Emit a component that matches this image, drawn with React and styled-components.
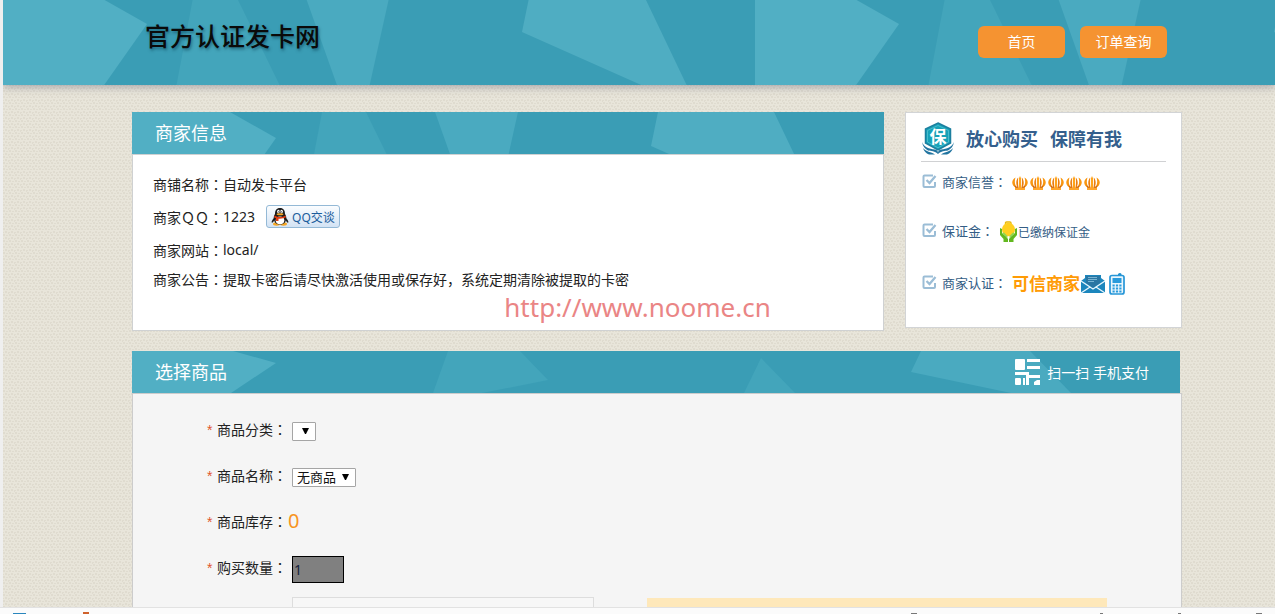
import styled, { createGlobalStyle } from "styled-components";

const svgUrl = (width, height, body) =>
  `url("data:image/svg+xml,${encodeURIComponent(
    `<svg xmlns="http://www.w3.org/2000/svg" width="${width}" height="${height}">${body}</svg>`
  )}")`;

const paper = svgUrl(
  6,
  6,
  `<rect width="6" height="6" fill="#e8e5da"/>
   <path d="M0 0h2v2h-2zM3 1h2v1h-2zM2 3h2v2h-2zM5 4h1v2h-1zM0 4h1v1h-1z" fill="#dfdbcf"/>`
);

const facets = svgUrl(
  752,
  90,
  `<rect width="752" height="90" fill="#3a9db5"/>
   <path d="M0 0H98L144 26L99 90H0z" fill="#51afc4"/>
   <path d="M190 0H234L278 90H173z" fill="#43a5bb"/>
   <path d="M303 0H386L366 90H335z" fill="#4aaac0"/>
   <path d="M526 0H642L685 90H645L519 34z" fill="#4fadc2"/>`
);

const wideFacets = svgUrl(
  1050,
  42,
  `<rect width="1050" height="42" fill="#3a9db5"/>
   <path d="M0 0H101L144 12L99 42H0z" fill="#51afc4"/>
   <path d="M316 0H388L416 29L350 42H301z" fill="#43a5bb"/>
   <path d="M629 7L663 42H612z" fill="#43a5bb"/>
   <path d="M789 0H898L939 42H879L779 21z" fill="#4aaac0"/>`
);

const arrow = svgUrl(7, 7, `<path d="M0 0H7L4 6H3z" fill="#000"/>`);

const GlobalStyle = createGlobalStyle`
  * {
    box-sizing: border-box;
  }
  body {
    margin: 0;
    font-family: "Noto Sans", "Noto Sans CJK SC", sans-serif;
    font-size: 14px;
    color: #222;
  }
  h1, h2, h3, p, ul {
    margin: 0;
    padding: 0;
    font-weight: 400;
  }
  ul {
    list-style: none;
  }
  a {
    color: inherit;
    text-decoration: none;
  }
`;

const Shell = styled.div`
  position: relative;
  display: grid;
  grid-template-rows: minmax(0, 1fr) 7px;
  height: 100vh;
  overflow: hidden;
`;

const Page = styled.div`
  overflow: hidden;
  border-left: 3px solid #efefef;
  background: ${paper};
`;

const Header = styled.header`
  display: flex;
  justify-content: space-between;
  align-items: flex-start;
  height: 85px;
  padding: 26px 108px 0 142px;
  background: ${facets} 0 -2px repeat-x;
  box-shadow: 0 2px 8px rgba(90, 90, 110, 0.45);
`;

const Logo = styled.h1`
  font-size: 25px;
  font-weight: 500;
  line-height: 20px;
  color: #0a0a0a;
  text-shadow: 1px 2px 3px rgba(0, 50, 70, 0.5);
`;

const Nav = styled.nav`
  display: flex;
  gap: 15px;
`;

const NavLink = styled.a`
  width: 87px;
  border-radius: 6px;
  background: #f59331;
  color: #fff;
  line-height: 32px;
  text-align: center;
`;

const Main = styled.main`
  display: grid;
  gap: 20px;
  padding: 27px 93px 0 129px;
`;

const TopRow = styled.div`
  display: grid;
  grid-template-columns: minmax(0, 1fr) 277px;
  gap: 21px;
`;

const PanelHead = styled.div`
  display: flex;
  justify-content: space-between;
  align-items: center;
  height: 42px;
  margin-right: ${(props) => (props.$wide ? "2px" : "0")};
  padding: 0 31px 0 23px;
  background: ${(props) => (props.$wide ? wideFacets : facets)} no-repeat #3a9db5;
  color: #fff;
`;

const PanelTitle = styled.h2`
  padding-bottom: 2px;
  font-size: 18px;
`;

const PanelBody = styled.div`
  border: 1px solid #cfd1d2;
  background: #fff;
`;

const ShopBody = styled(PanelBody)`
  height: 177px;
  padding: 12px 20px;
`;

const InfoRow = styled.p`
  display: flex;
  align-items: center;
  height: ${(props) => (props.$tight ? "26px" : "33px")};
`;

const QQButton = styled.button`
  display: flex;
  align-items: center;
  gap: 3px;
  width: 74px;
  height: 23px;
  margin-left: 11px;
  padding: 0 4px;
  border: 1px solid #94b9d6;
  border-radius: 3px;
  background: linear-gradient(#fbfdff, #d3e3f4);
  font: inherit;
  font-size: 12px;
  color: #1c5d9c;
  white-space: nowrap;
`;

/* the full-width colon sits in the middle of its cell in the TC face */
const Mark = styled.span`
  font-family: "Noto Sans CJK TC", sans-serif;
`;

const Aside = styled.aside`
  height: 216px;
  padding: 8px 15px;
  border: 1px solid #d2d4d6;
  background: #fff;
  color: #345d85;
  font-size: 13px;
`;

const Promise = styled.h3`
  display: flex;
  align-items: center;
  height: 41px;
  padding-bottom: 6px;
  border-bottom: 1px solid #d0d1d3;
  font-size: 18px;
  font-weight: 700;
  color: #345f8d;
  white-space: nowrap;
  svg {
    margin-right: 11px;
  }
  span + span {
    margin-left: 12px;
  }
`;

const TrustRow = styled.li`
  display: flex;
  align-items: center;
  height: ${(props) => props.$height};
  padding-left: 1px;
  > svg:first-child {
    margin-right: 5px;
  }
`;

const TrustValue = styled.span`
  display: flex;
  align-items: center;
  gap: ${(props) => props.$gap || "0"};
  margin-left: 5px;
  padding-top: 3px;
  font-size: 12px;
`;

const Trusted = styled.strong`
  font-size: 17px;
  line-height: 20px;
  color: #ff9b05;
`;

const ScanLink = styled.a`
  display: flex;
  align-items: center;
  gap: 6px;
`;

const OrderForm = styled.form`
  padding: 12px 0 0 74px;
  border: 1px solid #ccc;
  background: #f5f5f5;
`;

const Field = styled.div`
  display: flex;
  align-items: center;
  height: 46px;
`;

const Label = styled.label`
  width: 81px;
  white-space: nowrap;
  &::before {
    content: "*";
    display: inline-block;
    width: 10px;
    font-family: "Liberation Sans", sans-serif;
    color: #e0562b;
  }
`;

const Select = styled.select`
  appearance: none;
  width: ${(props) => props.$width};
  height: 19px;
  margin: 4px 0 0 4px;
  padding: 0 0 0 4px;
  border: 1px solid #a5a5a5;
  border-radius: 1px;
  background: ${arrow} no-repeat right 6px top 5px #fff;
  font: inherit;
  font-size: 13px;
  line-height: 17px;
  color: #111;
`;

const Stock = styled.output`
  font-size: 20px;
  line-height: 24px;
  color: #f7941e;
`;

const Quantity = styled.input`
  width: 52px;
  height: 27px;
  margin: 4px 0 0 4px;
  padding: 0 1px;
  border: 1px solid #000;
  background: #808080;
  font: inherit;
  color: #16213a;
`;

const NoteRow = styled.div`
  display: flex;
  align-items: flex-start;
  gap: 53px;
  padding: 7px 74px 0 85px;
`;

const Contact = styled.input`
  width: 302px;
  height: 36px;
  border: 1px solid #ddd;
  background: #f7f7f7;
`;

const Hint = styled.div`
  flex: 1;
  height: 36px;
  margin-top: 1px;
  background: #fee8ba;
`;

const StatusBar = styled.footer`
  display: flex;
  justify-content: space-between;
  align-items: flex-end;
  padding: 0 13px;
  border-top: 1px solid #e2e2e2;
  background: #fbfbfb;
`;

const TabGroup = styled.div`
  display: flex;
  align-items: flex-end;
  gap: ${(props) => props.$gap};
`;

const TabTip = styled.span`
  width: ${(props) => props.$width};
  height: ${(props) => props.$height || "1px"};
  margin-right: ${(props) => props.$space || "0"};
  background: ${(props) => props.$color || "#777"};
`;

const Watermark = styled.div`
  position: absolute;
  top: 50%;
  left: 50%;
  transform: translate(-50%, -50%);
  font-family: "Comic Sans MS", "Noto Sans", sans-serif;
  font-size: 26px;
  line-height: 30px;
  color: #ea8585;
  pointer-events: none;
`;

const Colon = () => <Mark>：</Mark>;

const Penguin = () => (
  <svg width="18" height="18" viewBox="0 0 18 18">
    <path d="M3 10C1 12 0 14 1 15L3 13zM15 10C17 12 18 14 17 15L15 13z" fill="#222" />
    <ellipse cx="5.5" cy="16" rx="3.5" ry="1.7" fill="#f5a623" />
    <ellipse cx="12.5" cy="16" rx="3.5" ry="1.7" fill="#f5a623" />
    <path d="M9 0C5.5 0 4 2.500 4 6C2.500 8 2.500 10 3 12C4 15.500 6 16.500 9 16.500S14 15.500 15 12C15.500 10 15.500 8 14 6C14 2.500 12.500 0 9 0z" fill="#1b1b1b" />
    <ellipse cx="9" cy="12.300" rx="4.300" ry="3.900" fill="#fff" />
    <ellipse cx="7.400" cy="3.600" rx="1.300" ry="1.800" fill="#fff" />
    <ellipse cx="10.600" cy="3.600" rx="1.300" ry="1.800" fill="#fff" />
    <circle cx="7.800" cy="3.800" r=".6" />
    <circle cx="10.200" cy="3.800" r=".6" />
    <ellipse cx="9" cy="6.300" rx="3.400" ry="1" fill="#f5a623" />
    <path d="M3.500 7.500C7 9.500 11 9.500 14.500 7.500L15 9.300C13 10.400 10 11 7.500 10.700V13H5V10.300L3.200 9.400z" fill="#e03c12" />
  </svg>
);

const Shield = () => (
  <svg width="34" height="33" viewBox="0 0 34 33">
    <path d="M17 1L29.500 7V21L17 28L4.500 21V7z" fill="#17a2b8" stroke="#1c7f9f" strokeWidth="1.500" />
    <path d="M17 3.500L27.500 8.500V20L17 25.800L6.500 20V8.500z" fill="none" stroke="#5fc6d4" strokeWidth=".7" />
    <path d="M1 20C3 25 8 27 14 27.500C16 28 17 29 17 31C17 29 18 28 20 27.500C26 27 31 25 33 20C32.500 24 30 27 27 28.500C24 29 20 29 17 32C14 29 10 29 7 28.500C4 27 1.500 24 1 20z" fill="#2174a0" />
    <path d="M2 26C5 30 10 29.500 14 32.500H8C5 31.500 3 29 2 26zM32 26C29 30 24 29.500 20 32.500H26C29 31.500 31 29 32 26z" fill="#2174a0" />
    <text x="17" y="20.500" textAnchor="middle" fontSize="17" fontWeight="700" fill="#fff">保</text>
  </svg>
);

const Tick = () => (
  <svg width="15" height="15" viewBox="0 0 15 15" fill="none" stroke="#9bbdd6">
    <path d="M11 1.500H2.500Q1.500 1.500 1.500 2.500V12Q1.500 13 2.500 13H12Q13 13 13 12V8" strokeWidth="2" />
    <path d="M4.500 6L7.500 9L13.500 2" strokeWidth="2.300" />
  </svg>
);

const Crown = () => (
  <svg width="16" height="14" viewBox="0 0 16 14">
    <path d="M4 12C-.8 9.500-1 4 3.500 1.500C2.300 5 2.600 8.500 5 12zM12 12C16.800 9.500 17 4 12.500 1.500C13.700 5 13.400 8.500 11 12z" fill="#f9960f" />
    <path d="M5.800 12C3.600 8.500 3.900 4 6.200 1.500C5.700 5 5.900 8.500 6.600 12zM10.200 12C12.400 8.500 12.100 4 9.800 1.500C10.300 5 10.100 8.500 9.400 12z" fill="#e97b0c" />
    <path d="M8 0L9.100 2.500V12H6.900V2.500z" fill="#ffa31a" />
    <path d="M2 8C3 9.800 4 10.500 5.500 10.800L6.500 12H3.500zM14 8C13 9.800 12 10.500 10.500 10.800L9.500 12H12.500z" fill="#c9600f" />
    <path d="M3 11.700H13V14H3z" fill="#ffa62b" />
  </svg>
);

const Deposit = () => (
  <svg width="19" height="21" viewBox="0 0 19 21">
    <path d="M6.500 3V2Q6.500 1 7.500 1H11Q12 1 12 2V3" fill="none" stroke="#e8b80c" strokeWidth="1.400" />
    <ellipse cx="9.500" cy="8.500" rx="6.500" ry="6.800" fill="#ffcf1f" />
    <path d="M1 7L3 8V12L7 15.500L9 18V21H4.500V18L1 14zM18 7L16 8V12L12 15.500L10 18V21H14.500V18L18 14z" fill="#62b81f" />
    <path d="M3 12L5 11.500L8.500 15V17zM16 12L14 11.500L10.500 15V17z" fill="#94d84e" />
  </svg>
);

const Mail = () => (
  <svg width="26" height="20" viewBox="0 0 26 20">
    <path d="M1 7L5 4V1H21V4L25 7V19H1z" fill="#1c86bd" />
    <path d="M6 2H20V9L13 14L6 9z" fill="#2a76a3" />
    <path d="M8 3.500H17M8 5.500H17M8 7.500H14" stroke="#8cc4e0" strokeWidth=".8" />
    <path d="M1 7L10 13L1 19M25 7L16 13L25 19M10 13L13 15L16 13" fill="none" stroke="#e9f6fc" strokeWidth="1.300" />
  </svg>
);

const Phone = () => (
  <svg width="19" height="22" viewBox="-3 0 19 22">
    <path d="M9 3V1Q11 -1 12.500 1V3" fill="#1f8fcc" />
    <rect x="1" y="2.500" width="14" height="18.500" rx="2" fill="#eaf6fd" stroke="#2696d8" strokeWidth="1.700" />
    <rect x="3.500" y="5" width="9" height="5" fill="#2a9bdc" />
    <path d="M3.500 12.500H12.500M3.500 15.500H12.500M3.500 18.500H12.500" stroke="#2a9bdc" strokeWidth="2" strokeDasharray="2.200 1.200" />
  </svg>
);

const QRIcon = () => (
  <svg width="26" height="26" viewBox="0 0 26 26" fill="#fff">
    <rect width="10" height="11" rx="1" />
    <path d="M12 0H25V3H12zM12 7H25V10H12zM0 13H14V16H25V19H14V26H11V16H0z" />
    <rect y="19" width="6" height="7" rx="1" />
    <path d="M8 19H10V26H8zM22 21H25V26H19V23z" />
  </svg>
);

export default function App() {
  return (
    <Shell>
      <GlobalStyle />
      <Page>
        <Header>
          <Logo>官方认证发卡网</Logo>
          <Nav>
            <NavLink href="#home">首页</NavLink>
            <NavLink href="#orders">订单查询</NavLink>
          </Nav>
        </Header>
        <Main>
          <TopRow>
            <section>
              <PanelHead>
                <PanelTitle>商家信息</PanelTitle>
              </PanelHead>
              <ShopBody>
                <InfoRow>
                  商铺名称<Colon />自动发卡平台
                </InfoRow>
                <InfoRow as="div">
                  商家ＱＱ<Colon />1223
                  <QQButton type="button">
                    <Penguin />
                    QQ交谈
                  </QQButton>
                </InfoRow>
                <InfoRow>
                  商家网站<Colon />local/
                </InfoRow>
                <InfoRow $tight>
                  商家公告<Colon />提取卡密后请尽快激活使用或保存好，系统定期清除被提取的卡密
                </InfoRow>
              </ShopBody>
            </section>
            <Aside>
              <Promise>
                <Shield />
                <span>放心购买</span>
                <span>保障有我</span>
              </Promise>
              <ul>
                <TrustRow $height="39px">
                  <Tick />
                  商家信誉<Colon />
                  <TrustValue $gap="2px">
                    {[1, 2, 3, 4, 5].map((id) => (
                      <Crown key={id} />
                    ))}
                  </TrustValue>
                </TrustRow>
                <TrustRow $height="58px">
                  <Tick />
                  保证金<Colon />
                  <TrustValue>
                    <Deposit />
                    已缴纳保证金
                  </TrustValue>
                </TrustRow>
                <TrustRow $height="46px">
                  <Tick />
                  商家认证<Colon />
                  <TrustValue>
                    <Trusted>可信商家</Trusted>
                    <Mail />
                    <Phone />
                  </TrustValue>
                </TrustRow>
              </ul>
            </Aside>
          </TopRow>
          <section>
            <PanelHead $wide>
              <PanelTitle>选择商品</PanelTitle>
              <ScanLink href="#scan">
                <QRIcon />
                扫一扫 手机支付
              </ScanLink>
            </PanelHead>
            <OrderForm>
              <Field>
                <Label htmlFor="category">
                  商品分类<Colon />
                </Label>
                <Select id="category" $width="24px" />
              </Field>
              <Field>
                <Label htmlFor="goods">
                  商品名称<Colon />
                </Label>
                <Select id="goods" $width="64px">
                  <option>无商品</option>
                </Select>
              </Field>
              <Field>
                <Label htmlFor="stock">
                  商品库存<Colon />
                </Label>
                <Stock id="stock">0</Stock>
              </Field>
              <Field>
                <Label htmlFor="quantity">
                  购买数量<Colon />
                </Label>
                <Quantity id="quantity" type="text" defaultValue="1" />
              </Field>
              <NoteRow>
                <Contact type="text" aria-label="联系方式" />
                <Hint />
              </NoteRow>
            </OrderForm>
          </section>
        </Main>
      </Page>
      <StatusBar>
        <TabGroup $gap="57px">
          <TabTip $width="13px" $color="#2a86bd" />
          <TabTip $width="6px" $height="2px" $color="#d0622c" />
        </TabGroup>
        <TabGroup $gap="75px">
          <TabTip $width="6px" $space="108px" />
          <TabTip $width="3px" />
          <TabTip $width="3px" />
          <TabTip $width="6px" />
        </TabGroup>
      </StatusBar>
      <Watermark>http://www.noome.cn</Watermark>
    </Shell>
  );
}
